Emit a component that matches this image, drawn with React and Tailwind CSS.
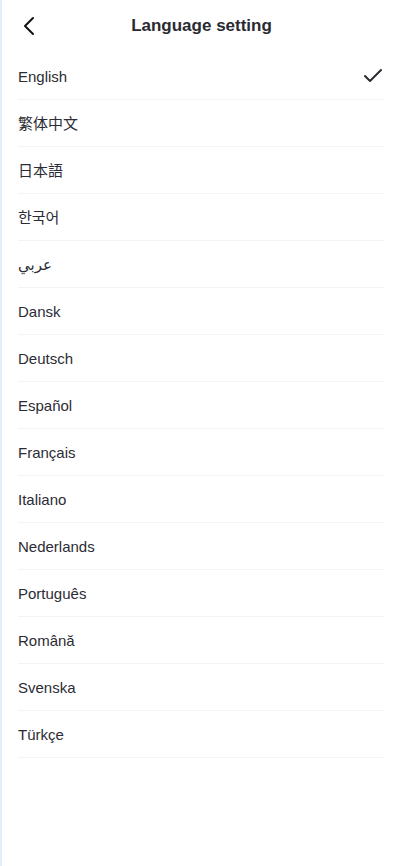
import React, { useState } from "react";

const languages = [
  "English",
  "繁体中文",
  "日本語",
  "한국어",
  "عربي",
  "Dansk",
  "Deutsch",
  "Español",
  "Français",
  "Italiano",
  "Nederlands",
  "Português",
  "Română",
  "Svenska",
  "Türkçe",
];

const App = () => {
  const [selected, setSelected] = useState("English");

  return (
    <div
      className="min-h-[866px] bg-white border-l-2 border-[#e4ecf7] text-[#2c2c34]"
      style={{ fontFamily: '"Liberation Sans", Arial, "Noto Sans CJK SC", "Noto Sans CJK KR", "DejaVu Sans", sans-serif' }}
    >
      <header className="relative h-[53px] flex items-center justify-center">
        <button className="absolute left-[17px] top-[15px] w-[20px] h-[22px] flex items-center justify-center">
          <svg width="14" height="20" viewBox="0 0 14 20" fill="none">
            <path d="M11 2L3 10l8 8" stroke="#111" strokeWidth="2" strokeLinecap="round" strokeLinejoin="round" />
          </svg>
        </button>
        <h1 className="text-[17px] font-bold text-[#2a2a32] -mt-[2px]">Language setting</h1>
      </header>

      <ul className="px-[16px]">
        {languages.map((lang) => (
          <li
            key={lang}
            onClick={() => setSelected(lang)}
            className="h-[47px] flex items-center justify-between border-b border-[#f3f4f6] mr-[1px]"
          >
            <span className="text-[15px] text-[#2c2c34] pt-[2px]">{lang}</span>
            {selected === lang && (
              <svg width="20" height="16" viewBox="0 0 20 16" fill="none" className="mr-[1px]">
                <path d="M2 8l5 5L18 2" stroke="#2b2b33" strokeWidth="2" strokeLinecap="round" strokeLinejoin="round" />
              </svg>
            )}
          </li>
        ))}
      </ul>
    </div>
  );
};

export default App;
